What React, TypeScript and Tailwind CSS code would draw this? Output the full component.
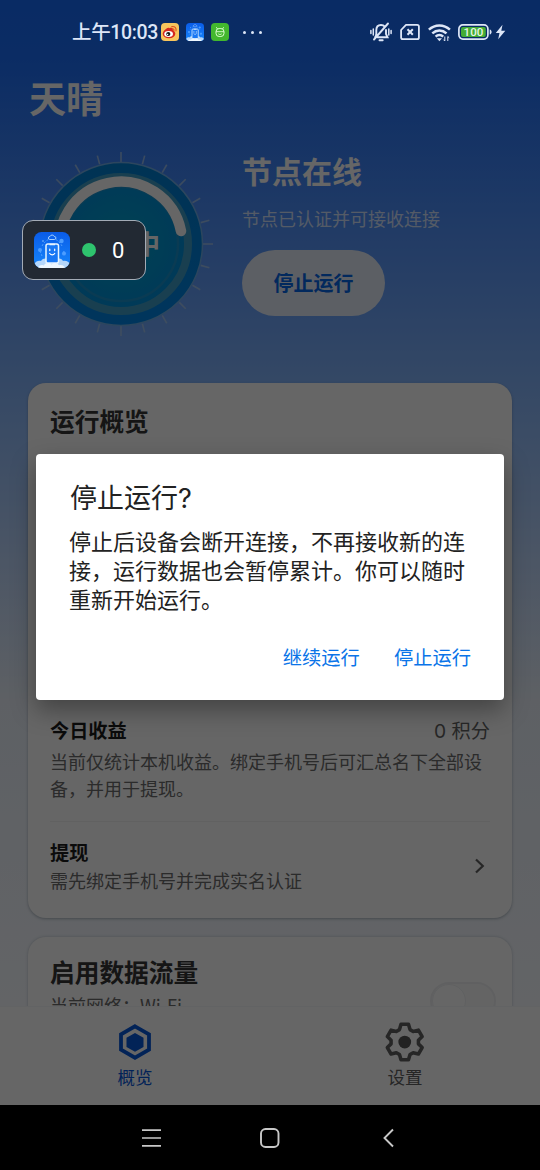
import React from "react";

function WeiboIcon() {
  return (
    <svg width="18" height="18" viewBox="0 0 18 18">
      <rect width="18" height="18" rx="4" fill="#f8c55c" />
      <ellipse cx="8" cy="10.8" rx="6.3" ry="4.5" fill="#d5281f" />
      <path d="M2.5 9c1.5-3.2 5-5 6-3.8 2.5-1 3.8.2 3.3 2" fill="#d5281f" />
      <ellipse cx="7.6" cy="11" rx="4.4" ry="3" fill="#fff" />
      <circle cx="7.3" cy="11" r="2.1" fill="#1b1b1b" />
      <circle cx="6.6" cy="11.4" r="0.7" fill="#fff" />
      <path d="M10.8 3.6c2.9-.6 4.8 1.4 4.2 4.3M11.2 5.8c1.3-.2 2 .6 1.7 1.8" fill="none" stroke="#e0501f" strokeWidth="1.1" strokeLinecap="round" />
    </svg>
  );
}

function AppLogo({ size }: { size: number }) {
  return (
    <svg width={size} height={size} viewBox="0 0 36 36">
      <defs>
        <linearGradient id={`logo${size}`} x1="0" y1="0" x2="0" y2="1">
          <stop offset="0" stopColor="#0a5ce8" />
          <stop offset="1" stopColor="#1686fa" />
        </linearGradient>
        <clipPath id={`clip${size}`}>
          <rect width="36" height="36" rx="7.5" />
        </clipPath>
      </defs>
      <g clipPath={`url(#clip${size})`}>
        <rect width="36" height="36" fill={`url(#logo${size})`} />
        <path d="M8 14c2-4 5-6 7.500-7M28 14c-1.500-3-4-5.500-7-7M6 19l2 5M30 19l-1 4" stroke="#63acff" strokeWidth="0.8" fill="none" strokeDasharray="2 1.500" />
        <circle cx="6" cy="18" r="2" fill="#4c9dff" />
        <circle cx="27.500" cy="9" r="2.200" fill="#4c9dff" />
        <circle cx="30" cy="21.500" r="2" fill="#4c9dff" />
        <circle cx="9" cy="9" r="0.8" fill="#8cc4ff" />
        <path d="M15.800 7.500a1.500 1.500 0 0 1 .2-3 2.300 2.300 0 0 1 4.300 0 1.500 1.500 0 0 1 .2 3z" fill="#0b62ee" stroke="#b8dcff" strokeWidth="0.9" />
        <path d="M0 36v-4c2-3 5-4 7-3 2-3 6-3 7-1h8c2-2 5-2 7 1 3-1 6 1 7 3v4z" fill="#b5d7fb" />
        <rect x="12" y="12" width="12.500" height="19" rx="1.800" fill="#1877f4" stroke="#e6f4ff" strokeWidth="1.500" />
        <path d="M15.500 12.500h5.500" stroke="#e6f4ff" strokeWidth="1.500" />
        <path d="M15.800 17.200v1.400M20.700 17.200v1.400M15.700 21.500c1.300 1.700 3.800 1.700 5 0" stroke="#fff" strokeWidth="1.200" fill="none" strokeLinecap="round" />
        <path d="M4 36.500c0-3 4-4.500 6-3 1-3 6-3 7.500-1 2-2.500 6.500-2 7.500.8 3-1.300 6 .7 6.500 3.200z" fill="#eef7ff" />
      </g>
    </svg>
  );
}

function GreenIcon() {
  return (
    <svg width="18" height="18" viewBox="0 0 18 18">
      <rect width="18" height="18" rx="4" fill="#43b82e" />
      <rect x="5" y="5.500" width="8" height="8" rx="3.200" fill="none" stroke="#dcffd0" strokeWidth="1" />
      <path d="M5.300 4.200 6.500 6M12.700 4.200 11.500 6M5 8.700h8M7.300 10.800c.9.900 2.500.9 3.400 0" stroke="#dcffd0" strokeWidth="0.9" fill="none" />
    </svg>
  );
}

function StatusBar() {
  return (
    <div className="absolute inset-x-0 top-0 z-20 flex h-16 items-center text-[#dde6f7]">
      <span className="ml-[72px] w-[89px] whitespace-nowrap pt-[2px] font-[Roboto,'Noto_Sans_CJK_SC',sans-serif] text-[19.500px] leading-none font-medium tracking-[-0.350px]">上午10:03</span>
      <div className="flex items-center gap-[7px]">
        <WeiboIcon />
        <AppLogo size={18} />
        <GreenIcon />
      </div>
      <div className="ml-[14px] flex gap-[5px]">
        <i className="size-[3px] rounded-full bg-[#dde6f7]" />
        <i className="size-[3px] rounded-full bg-[#dde6f7]" />
        <i className="size-[3px] rounded-full bg-[#dde6f7]" />
      </div>
      <div className="mr-[34px] ml-auto flex items-center">
        <svg width="22" height="20" viewBox="0 0 22 20" fill="none" stroke="#dde6f7" strokeWidth="1.900" strokeLinecap="round">
          <path d="M6.300 12.500V8.300C6.300 5 8.300 3 11 3c1.600 0 2.900.6 3.700 1.700M16 8v4l1.500 3.200H7.500M9.500 18.300h3.200M18 1.500 4 17.500" />
          <path d="M5 15.200l1.300-2.700M3.300 7v6M.9 8.500v3M18.800 7v6M21.100 8.500v3" strokeWidth="1.500" />
        </svg>
        <svg className="ml-2" width="20" height="18" viewBox="0 0 20 18" fill="none" stroke="#dde6f7" strokeWidth="1.800" strokeLinejoin="round">
          <path d="M6 1.800h11.200q1.700 0 1.700 1.700v11q0 1.700-1.700 1.700H2.800q-1.700 0-1.700-1.700V7z" />
          <path d="M7.500 6.300l5.300 5.400M12.800 6.300l-5.300 5.400" strokeWidth="2" />
        </svg>
        <svg className="ml-2" width="23" height="19" viewBox="0 0 23 19" fill="none" stroke="#dde6f7" strokeWidth="2.500">
          <path d="M.9 6.700c6-5.600 15-5.600 21 0M4.300 10.300c4.200-3.900 10-3.900 14.200 0M7.600 13.600c2.200-2 5.400-2 7.600 0" />
          <path d="M8.800 15.300h5.200l-2.600 2.900z" fill="#dde6f7" stroke="none" />
          <path d="M16.800 18v-4.500M16.800 18l-1.300-1.300M19.800 13.500V18M19.800 13.500l1.400 1.300" strokeWidth="1" />
        </svg>
        <svg className="ml-[7px]" width="34" height="16" viewBox="0 0 34 16">
          <rect x="0.900" y="0.900" width="29" height="14.200" rx="4" fill="none" stroke="#dde6f7" strokeWidth="1.700" />
          <rect x="3" y="3" width="24.800" height="10" rx="2" fill="#42ac34" />
          <path d="M31.700 5.500c1.300.3 1.900 1.300 1.900 2.500s-.6 2.200-1.900 2.500z" fill="#dde6f7" />
          <text x="15.400" y="12" textAnchor="middle" fontSize="11.500" fontWeight="500" fontFamily="Roboto" fill="#e8f6e6">100</text>
        </svg>
        <svg className="ml-[3px]" width="11" height="16" viewBox="0 0 11 16">
          <path d="M7.500.8.8 9h3.700L3.200 15.200 10.300 6.700H6.300z" fill="#dde6f7" />
        </svg>
      </div>
    </div>
  );
}

const ticks = Array.from({ length: 24 }, (_, i) => i * 15);

function Dial() {
  return (
    <svg className="shrink-0" width="190" height="190" viewBox="-95 -95 190 190">
      <defs>
        <radialGradient id="core">
          <stop offset="0" stopColor="#00a7cf" />
          <stop offset="1" stopColor="#008fdc" />
        </radialGradient>
        <linearGradient id="rim" x1="0" y1="0" x2="0" y2="1">
          <stop offset="0" stopColor="#007fd2" />
          <stop offset="1" stopColor="#0086e8" />
        </linearGradient>
      </defs>
      {ticks.map((a) => (
        <path key={a} d={a % 90 === 0 ? "M0-82V-92" : "M0-82.500V-91.500"} transform={`rotate(${a})`} stroke="#a3c4ea" strokeOpacity="0.85" strokeWidth="1.600" />
      ))}
      <circle r="81.500" fill="url(#rim)" stroke="#6faeea" strokeWidth="1.500" />
      <circle r="67" fill="url(#core)" stroke="#3f9fc8" strokeWidth="8" />
      <circle r="57" fill="none" stroke="#1a93d0" strokeWidth="2.500" />
      <path d="M-60 13A61.400 61.400 0 1 1 60-13" fill="none" stroke="#fff" strokeWidth="10.500" strokeLinecap="round" />
      <text x="0" y="10" textAnchor="middle" fontSize="26" fontWeight="700" fill="#fff">运行中</text>
    </svg>
  );
}

function Hero() {
  return (
    <header className="pt-[77px] text-white">
      <h1 className="pl-[29px] text-[37px] leading-10 font-bold">天晴</h1>
      <div className="mt-[32px] flex pl-[26px]">
        <Dial />
        <div className="ml-[26px] pt-px">
          <h2 className="text-[30px] leading-10 font-bold">节点在线</h2>
          <p className="mt-[15px] text-[18px] leading-[26px] text-white/75">节点已认证并可接收连接</p>
          <button className="mt-[19px] h-[66px] w-[143px] rounded-full bg-[#e6edf9] text-[20px] leading-none font-bold text-[#0666e8]">停止运行</button>
        </div>
      </div>
    </header>
  );
}

function Cards() {
  return (
    <main className="mt-[44px] flex flex-col gap-[19px] px-7">
      <section className="h-[535px] rounded-[18px] bg-white px-[22px] pt-[21px] shadow-[0_1px_3px_rgba(60,80,95,0.4)]">
        <h3 className="text-[24.700px] leading-8 font-bold text-[#363636]">运行概览</h3>
        <div className="mt-[281px] flex items-center justify-between font-[Inter,'Noto_Sans_CJK_SC',sans-serif] text-[19.200px] leading-7">
          <span className="font-bold text-[#1c1c1c]">今日收益</span>
          <span className="text-[#636363]">0 积分</span>
        </div>
        <p className="mt-[3px] w-[440px] text-[18px] leading-[27px] text-[#6b6b6b]">当前仅统计本机收益。绑定手机号后可汇总名下全部设备，并用于提现。</p>
        <hr className="mt-[19px] border-[#f2f2f2]" />
        <div className="mt-[16px] flex items-center justify-between">
          <div>
            <span className="block text-[19.200px] leading-7 font-bold text-[#1c1c1c]">提现</span>
            <p className="text-[18px] leading-7 text-[#6b6b6b]">需先绑定手机号并完成实名认证</p>
          </div>
          <svg className="mr-[4px]" width="12" height="18" viewBox="0 0 12 18" fill="none" stroke="#606060" strokeWidth="2.200">
            <path d="M2 2.500 8.800 9 2 15.500" />
          </svg>
        </div>
      </section>
      <section className="flex h-[120px] justify-between rounded-[18px] bg-white pt-[18px] pr-4 pl-[22px] shadow-[0_0_3px_rgba(60,80,95,0.3)]">
        <div>
          <h3 className="text-[24.700px] leading-8 font-bold text-[#363636]">启用数据流量</h3>
          <p className="mt-[4px] text-[18px] leading-7 text-[#6b6b6b]">当前网络：Wi-Fi</p>
        </div>
        <div className="mt-[27px] h-[38px] w-[66px] rounded-full border-2 border-[#f0f1f3] bg-[#fafbfb]">
          <div className="size-[34px] rounded-full border border-[#f0f1f3] bg-white" />
        </div>
      </section>
    </main>
  );
}

const gear = "M15.300 2.500h7.400l1.500 5.200 3.100 1.800 5.200-1.300 3.700 6.400-3.700 3.600v3.600l3.700 3.600-3.700 6.400-5.200-1.300-3.100 1.800-1.500 5.200h-7.400l-1.500-5.200-3.100-1.800-5.200 1.300-3.700-6.400 3.700-3.600v-3.600l-3.700-3.600 3.700-6.400 5.200 1.300 3.100-1.800z";

function TabBar() {
  return (
    <nav className="absolute inset-x-0 bottom-[65px] flex h-[99px] border-t border-[#f5f7f9] bg-white text-[17.500px] leading-6">
      <div className="flex flex-1 flex-col items-center pt-[15px] text-[#0757da]">
        <svg width="40" height="40" viewBox="0 0 40 40">
          <path d="M20 4.300 34 12.300v15.400L20 35.700 6 27.700V12.300z" fill="none" stroke="#0757da" strokeWidth="3.800" />
          <path d="M20 11 28.500 15.800v9.200L20 29.800 11.500 25v-9.200z" fill="#0757da" />
        </svg>
        <span className="mt-[3px]">概览</span>
      </div>
      <div className="flex flex-1 flex-col items-center pt-[15px] text-[#606060]">
        <svg width="40" height="40" viewBox="-0.500 0.200 39.500 39.500">
          <path d={gear} fill="none" stroke="#606060" strokeWidth="3.500" strokeLinejoin="round" />
          <circle cx="19" cy="20" r="6.300" fill="#555" />
        </svg>
        <span className="mt-[3px]">设置</span>
      </div>
    </nav>
  );
}

function SystemNav() {
  return (
    <div className="absolute inset-x-0 bottom-0 z-20 flex h-[65px] items-center bg-black">
      <svg className="ml-[141px]" width="20" height="20" viewBox="0 0 20 20" stroke="#c8c8c8" strokeWidth="1.700">
        <path d="M1 2.200h19M1 10h19M1 17.800h19" />
      </svg>
      <svg className="ml-[99px]" width="20" height="20" viewBox="0 0 20 20" fill="none" stroke="#c8c8c8" strokeWidth="1.900">
        <rect x="1" y="1" width="17.500" height="18" rx="4.500" />
      </svg>
      <svg className="ml-[102px]" width="14" height="20" viewBox="0 0 14 20" fill="none" stroke="#c8c8c8" strokeWidth="1.900">
        <path d="M11 1.500 2.500 10l8.500 8.500" />
      </svg>
    </div>
  );
}

function FloatingBadge() {
  return (
    <div className="absolute top-[220px] left-[22px] z-20 flex h-[60px] w-[124px] items-center rounded-[11px] border border-[#a3abb6] bg-[#222933] pl-[11px]">
      <AppLogo size={36} />
      <i className="ml-3 size-[14px] rounded-full bg-[#2ec36e]" />
      <span className="ml-[16px] pt-[2px] font-[Roboto,sans-serif] text-[22px] leading-none text-white">0</span>
    </div>
  );
}

function Dialog() {
  return (
    <div role="dialog" className="absolute top-[454px] left-9 z-20 h-[246px] w-[468px] rounded-[4px] bg-white pt-[29px] pl-[34px] font-[Inter,'Noto_Sans_CJK_SC',sans-serif] shadow-[0_10px_24px_rgba(0,0,0,0.35)]">
      <h2 className="text-[27px] leading-8 text-[#222]">停止运行?</h2>
      <p className="mt-[13px] -ml-px w-[398px] text-[22px] leading-[29px] text-[#222]">停止后设备会断开连接，不再接收新的连接，运行数据也会暂停累计。你可以随时重新开始运行。</p>
      <div className="mt-[29px] flex justify-end gap-[34px] pr-[33px] text-[19.300px] leading-7 text-[#0a74e8]">
        <button>继续运行</button>
        <button>停止运行</button>
      </div>
    </div>
  );
}

export default function App() {
  return (
    <div className="relative h-[1170px] w-[540px] overflow-hidden bg-[linear-gradient(180deg,#176cfb_0px,#1d6ffb_60px,#86b6fd_390px,#eaf1fb_700px,#f7faff_1000px)] font-['Noto_Sans_CJK_SC',sans-serif]">
      <Hero />
      <Cards />
      <TabBar />
      <div className="absolute inset-0 z-10 bg-black/60" />
      <StatusBar />
      <FloatingBadge />
      <Dialog />
      <SystemNav />
    </div>
  );
}
